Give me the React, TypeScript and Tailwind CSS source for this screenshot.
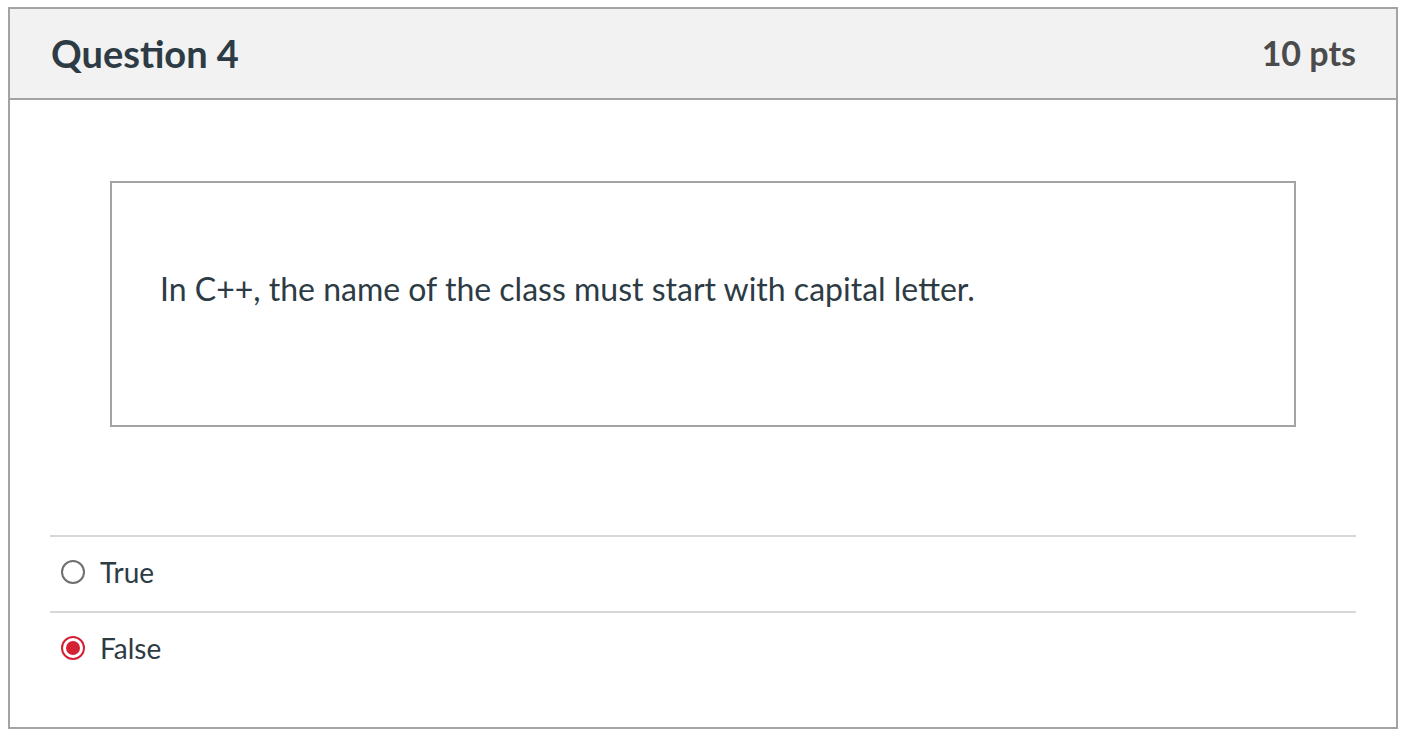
export default function App() {
  return (
    <div className="min-h-screen bg-white pt-[7px] pl-[8px] pr-[10px] font-['Lato','Liberation_Sans',sans-serif] text-[#2d3b45]">
      <div className="w-[1390px] h-[722px] border-2 border-[#a3a3a3] flex flex-col">
        <div className="h-[91px] bg-[#f2f2f2] border-b-2 border-[#a3a3a3] flex items-center justify-between pl-[41px] pr-[40px]">
          <h2 className="text-[38px] font-bold leading-none -mt-[2px]">Question 4</h2>
          <div className="text-[34px] font-bold leading-none text-[#4b4b4b] -mt-[2px]">10 pts</div>
        </div>

        <div className="px-[40px] pt-[81px]">
          <div className="mx-[60px] h-[246px] border-2 border-[#a3a3a3] px-[48px] pt-[86px]">
            <p className="text-[32px] leading-[40px]">
              In C++, the name of the class must start with capital letter.
            </p>
          </div>

          <div className="mt-[108px]">
            <label className="flex items-center h-[76px] border-t-2 border-[#d7d7d7] gap-[15px] pl-[11px] pb-[4px]">
              <span className="w-[24px] h-[24px] rounded-full border-2 border-[#6f6f6f] bg-white"></span>
              <span className="text-[28px] leading-none">True</span>
            </label>
            <label className="flex items-center h-[76px] border-t-2 border-[#d7d7d7] gap-[15px] pl-[11px] pb-[4px]">
              <span className="w-[24px] h-[24px] rounded-full border-2 border-[#d42134] bg-white flex items-center justify-center">
                <span className="w-[14px] h-[14px] rounded-full bg-[#d42134]"></span>
              </span>
              <span className="text-[28px] leading-none">False</span>
            </label>
          </div>
        </div>
      </div>
    </div>
  );
}
